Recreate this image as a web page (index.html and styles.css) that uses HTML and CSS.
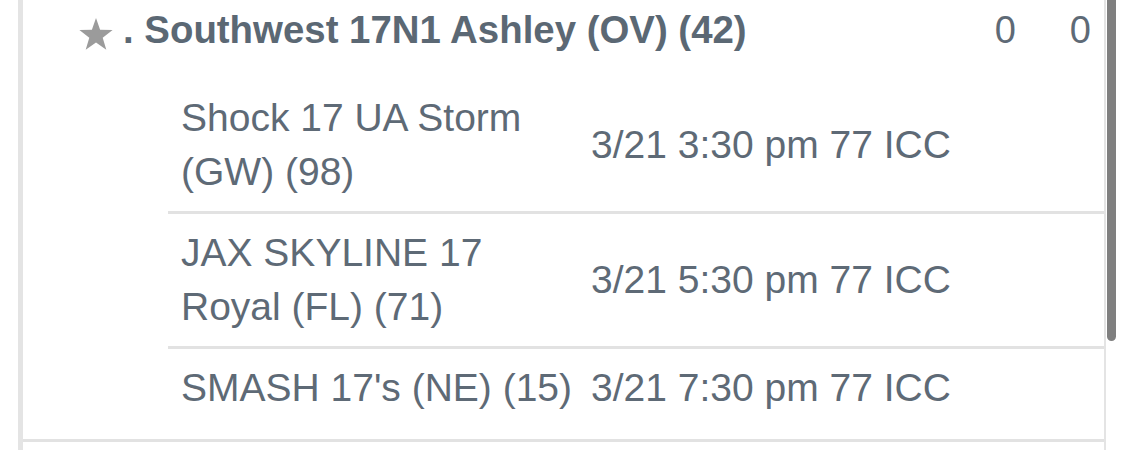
FILE: index.html
```html
<!DOCTYPE html>
<html lang="en">
<head>
<meta charset="utf-8">
<title>Pool</title>
<link rel="stylesheet" href="styles.css">
</head>
<body>
<div class="panel">
  <div class="item">
    <div class="head">
      <svg class="star" width="34" height="34" viewBox="0 0 34 34" aria-hidden="true"><polygon points="17,1 21.1,12.8 33.6,13.1 23.7,20.7 27.3,32.7 17,25.5 6.7,32.7 10.3,20.7 0.4,13.1 12.9,12.8" fill="#9b9b9b"/></svg>
      <span class="title">. Southwest 17N1 Ashley (OV) (42)</span>
      <span class="num">0</span>
      <span class="num">0</span>
    </div>
    <div class="games">
      <div class="game">
        <div class="team">Shock 17 UA Storm (GW) (98)</div>
        <div class="when">3/21 3:30 pm 77 ICC</div>
      </div>
      <div class="game">
        <div class="team">JAX SKYLINE 17 Royal (FL) (71)</div>
        <div class="when">3/21 5:30 pm 77 ICC</div>
      </div>
      <div class="game">
        <div class="team">SMASH 17's (NE) (15)</div>
        <div class="when">3/21 7:30 pm 77 ICC</div>
      </div>
    </div>
  </div>
  <div class="item next"></div>
</div>
<div class="scrollbar"></div>
</body>
</html>
```

FILE: styles.css
```css
html, body {
  margin: 0;
  padding: 0;
  background: #ffffff;
}
body {
  font-family: "Liberation Sans", Arial, Helvetica, sans-serif;
  color: #5e6a76;
  overflow: hidden;
  height: 450px;
}
.panel {
  margin-left: 18px;
  width: 1081px;
  border-left: 5px solid #e4e4e4;
  border-right: 2px solid #e4e4e4;
  min-height: 450px;
}
.item {
  border-bottom: 3px solid #e2e2e2;
}
.item.next {
  border-bottom: none;
  height: 20px;
}
.head {
  display: flex;
  align-items: flex-start;
  padding: 5px 0 24px 56px;
  height: 50px;
}
.star {
  margin-top: 12px;
  margin-right: 10px;
  flex: none;
}
.title {
  font-weight: bold;
  font-size: 38.4px;
  line-height: 50px;
  color: #5b6874;
  white-space: nowrap;
  flex: 1;
}
.num {
  width: 75px;
  text-align: right;
  font-size: 38px;
  line-height: 50px;
  flex: none;
}
.num:last-child {
  margin-right: 13px;
}
.games {
  margin-left: 145px;
  margin-bottom: 12px;
}
.game {
  display: grid;
  grid-template-columns: 410px 1fr;
  align-items: center;
  font-size: 39px;
  line-height: 54px;
}
.game + .game {
  border-top: 3px solid #e2e2e2;
}
.team {
  padding: 12px 0 12px 13px;
}
.when {
  padding: 12px 13px;
  white-space: nowrap;
}
.scrollbar {
  position: absolute;
  left: 1107px;
  top: -20px;
  width: 9px;
  height: 361px;
  background: #7f7f7f;
  border-radius: 5px;
}
```
